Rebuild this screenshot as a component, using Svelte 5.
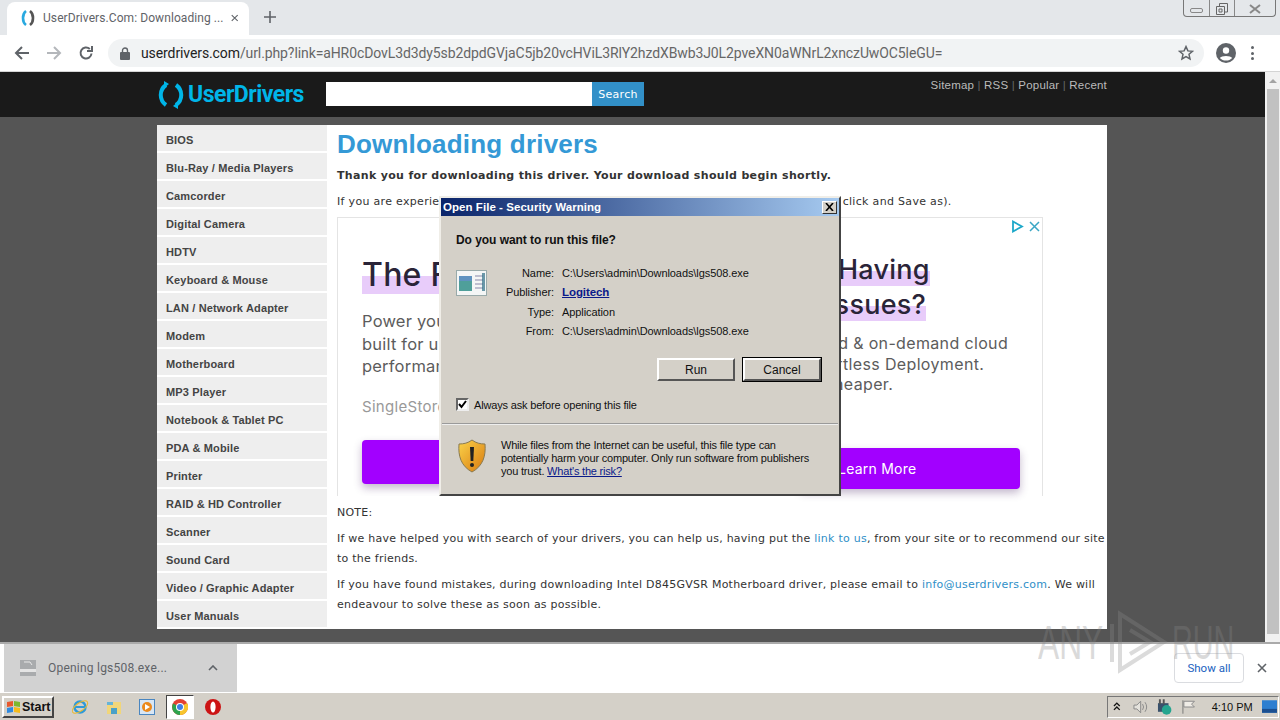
<script>
  const categories = [
    "BIOS", "Blu-Ray / Media Players", "Camcorder", "Digital Camera", "HDTV",
    "Keyboard & Mouse", "LAN / Network Adapter", "Modem", "Motherboard", "MP3 Player",
    "Notebook & Tablet PC", "PDA & Mobile", "Printer", "RAID & HD Controller",
    "Scanner", "Sound Card", "Video / Graphic Adapter", "User Manuals",
  ];
  const url = "aHR0cDovL3d3dy5sb2dpdGVjaC5jb20vcHViL3RlY2hzdXBwb3J0L2pveXN0aWNrL2xnczUwOC5leGU=";
  const fields = [
    ["Name:", "C:\\Users\\admin\\Downloads\\lgs508.exe"],
    ["Publisher:", "Logitech"],
    ["Type:", "Application"],
    ["From:", "C:\\Users\\admin\\Downloads\\lgs508.exe"],
  ];
</script>

<div class="screen">
  <div class="tabstrip">
    <div class="tab">
      <svg class="favicon" width="16" height="18" viewBox="0 0 16 18">
        <path d="M6 2C2 5 2 13 6 16" fill="none" stroke="#29a9e0" stroke-width="2.6"/>
        <path d="M10 2c4 3 4 11 0 14" fill="none" stroke="#555" stroke-width="2.6"/>
      </svg>
      <span class="tabtitle">UserDrivers.Com: Downloading ...</span>
      <svg width="10" height="10" viewBox="0 0 10 10"><path d="M1 1l8 8M9 1l-8 8" stroke="#5f6368" stroke-width="1.5"/></svg>
    </div>
    <svg class="newtab" width="12" height="12" viewBox="0 0 12 12"><path d="M6 0v12M0 6h12" stroke="#5f6368" stroke-width="1.6"/></svg>
    <div class="winbtns">
      <span class="wb min"><i></i></span>
      <span class="wb res">
        <svg width="12" height="12" viewBox="0 0 12 12"><path d="M3.5 3V.5h8V9H9M.5 3.5h8v8h-8zM3 6h3v3H3z" fill="none" stroke="#666"/></svg>
      </span>
      <span class="wb cls">
        <svg width="12" height="10" viewBox="0 0 12 10"><path d="M1 1l10 8M11 1L1 9" stroke="#888" stroke-width="2"/></svg>
      </span>
    </div>
  </div>

  <div class="toolbar">
    <svg class="navicon" width="16" height="16" viewBox="0 0 16 16"><path d="M15 8H2M8 2L2 8l6 6" fill="none" stroke="#5f6368" stroke-width="2"/></svg>
    <svg class="navicon" width="16" height="16" viewBox="0 0 16 16"><path d="M1 8h13M8 2l6 6-6 6" fill="none" stroke="#b4b7bb" stroke-width="2"/></svg>
    <svg class="navicon" width="16" height="16" viewBox="0 0 16 16"><path d="M13.5 8.5A5.5 5.5 0 1 1 11.8 4M14 1v5H9" fill="none" stroke="#5f6368" stroke-width="2"/></svg>
    <div class="omnibox">
      <svg width="10" height="13" viewBox="0 0 10 13"><rect y="5" width="10" height="8" rx="1" fill="#5f6368"/><path d="M2.5 5.5V3.5a2.5 2.5 0 0 1 5 0v2" fill="none" stroke="#5f6368" stroke-width="1.4"/></svg>
      <span class="url"><b>userdrivers.com</b>/url.php?link={url}</span>
      <svg class="star" width="16" height="16" viewBox="0 0 16 16"><path d="M8 1.6l1.9 4.3 4.6.4-3.5 3 1 4.6L8 11.5l-4 2.4 1-4.6-3.5-3 4.6-.4z" fill="none" stroke="#5f6368" stroke-width="1.5"/></svg>
    </div>
    <svg class="avatar" width="20" height="20" viewBox="0 0 20 20"><circle cx="10" cy="10" r="10" fill="#5f6368"/><circle cx="10" cy="7.5" r="3.2" fill="#fff"/><path d="M3.8 15c1.5-2.8 10.9-2.8 12.4 0-3 3.4-9.4 3.4-12.4 0z" fill="#fff"/></svg>
    <div class="dots"><i></i><i></i><i></i></div>
  </div>

  <div class="viewport">
    <div class="page">
      <header class="site-head">
        <div class="head-inner">
          <div class="logo">
            <svg width="28" height="28" viewBox="0 0 28 28">
              <path d="M9 4C2 9 2 19 9 24" fill="none" stroke="#00b5e8" stroke-width="4"/>
              <path d="M19 4c7 5 7 15 0 20" fill="none" stroke="#00b5e8" stroke-width="4"/>
              <path d="M7 0l5 3-5 4zM21 28l-5-3 5-4z" fill="#00b5e8"/>
            </svg>
            <span>UserDrivers</span>
          </div>
          <div class="search">
            <div class="search-input"></div>
            <div class="search-btn">Search</div>
          </div>
          <nav class="top-links">Sitemap <em>|</em> RSS <em>|</em> Popular <em>|</em> Recent</nav>
        </div>
      </header>

      <div class="wrap">
        <aside class="sidebar">
          {#each categories as c}
            <div class="cat">{c}</div>
          {/each}
        </aside>
        <main class="content">
          <h1>Downloading drivers</h1>
          <p class="thanks">Thank you for downloading this driver. Your download should begin shortly.</p>
          <p class="exp">If you are experiencing problems with your download, please use this direct link (right click and Save as).</p>

          <div class="ad">
            <div class="adchoice">
              <svg width="13" height="13" viewBox="0 0 13 13"><path d="M2 1.5v10l9-5z" fill="none" stroke="#1ca8c9" stroke-width="1.8"/></svg>
              <svg width="11" height="11" viewBox="0 0 11 11"><path d="M1 1l9 9M10 1l-9 9" stroke="#3aa6c4" stroke-width="1.5"/></svg>
            </div>
            <div class="ad-left">
              <div class="ad-h"><mark>The Fastest Database</mark></div>
              <div class="ad-p">Power your apps with a<br>built for unified data<br>performance at scale</div>
              <div class="ad-s">SingleStore Inc.</div>
              <div class="ad-btn"></div>
            </div>
            <div class="ad-right">
              <div class="ad-h r1"><mark>Having</mark></div>
              <div class="ad-h r2"><mark>Issues?</mark></div>
              <div class="ad-p">
                <div class="p1">and &amp; on-demand cloud</div>
                <div class="p2">Effortless Deployment.</div>
                <div class="p3">Cheaper.</div>
              </div>
              <div class="ad-btn"><span>Learn More</span></div>
            </div>
          </div>

          <p class="note">NOTE:</p>
          <p class="para">If we have helped you with search of your drivers, you can help us, having put the <a href="#top">link to us</a>, from your site or to recommend our site to the friends.</p>
          <p class="para">If you have found mistakes, during downloading Intel D845GVSR Motherboard driver, please email to <a href="#top">info@userdrivers.com</a>. We will endeavour to solve these as soon as possible.</p>
        </main>
      </div>

      <section class="dialog">
        <div class="titlebar">
          <span>Open File - Security Warning</span>
          <span class="dlg-x"><svg width="9" height="8" viewBox="0 0 9 8"><path d="M1 0l7 8M8 0L1 8" stroke="#000" stroke-width="1.6"/></svg></span>
        </div>
        <div class="dlg-body">
          <div class="question">Do you want to run this file?</div>
          <div class="info">
            <svg class="appicon" width="32" height="27" viewBox="0 0 32 27">
              <rect x=".5" y=".5" width="30" height="25" fill="#f4f6f6" stroke="#9aa"/>
              <rect x="3" y="6" width="13" height="15" fill="#4f9f9a"/>
              <rect x="3" y="6" width="13" height="5" fill="#5f92c0"/>
              <path d="M19 6h8M19 10h8M19 14h8M19 18h8" stroke="#88a"/>
              <path d="M26 3h3v18h-3" fill="#2f6f88" opacity=".7"/>
            </svg>
            <dl>
              {#each fields as [k, v]}
                <div class="row">
                  <dt>{k}</dt>
                  {#if k === "Publisher:"}
                    <dd><a class="publisher" href="#top">{v}</a></dd>
                  {:else}
                    <dd>{v}</dd>
                  {/if}
                </div>
              {/each}
            </dl>
          </div>
          <div class="btns">
            <button class="w2k">Run</button>
            <button class="w2k default">Cancel</button>
          </div>
          <label class="always">
            <span class="check"><svg width="9" height="9" viewBox="0 0 9 9"><path d="M1 4l2.5 3L8 1" fill="none" stroke="#000" stroke-width="2"/></svg></span>
            Always ask before opening this file
          </label>
        </div>
        <div class="dlg-warn">
          <svg width="30" height="34" viewBox="0 0 30 34">
            <defs>
              <linearGradient id="sh" x1="0" x2="1" y1="0" y2="1"><stop offset="0" stop-color="#fbd34a"/><stop offset="1" stop-color="#d87a10"/></linearGradient>
            </defs>
            <path d="M15 1c4 3 8 4 13 4 1 12-2 22-13 28C4 27 1 17 2 5c5 0 9-1 13-4z" fill="url(#sh)" stroke="#8a7a50"/>
            <path d="M13 8h4l-.7 14h-2.6z" fill="#222"/><circle cx="15" cy="26" r="2" fill="#222"/>
          </svg>
          <p>While files from the Internet can be useful, this file type can potentially harm your computer. Only run software from publishers you trust. <a href="#top">What's the risk?</a></p>
        </div>
      </section>
    </div>

    <div class="scrollbar">
      <div class="sb-up"><i></i></div>
      <div class="sb-thumb"></div>
    </div>
  </div>

  <div class="downloads">
    <div class="dl-item">
      <svg width="16" height="16" viewBox="0 0 16 16"><rect width="16" height="16" fill="#a9abad"/><rect x="0" y="9" width="16" height="3" fill="#e4e4e4"/><path d="M4 2h6l2 3" fill="none" stroke="#e8e8e8"/></svg>
      <span class="dl-name">Opening lgs508.exe...</span>
      <svg class="chev" width="10" height="6" viewBox="0 0 10 6"><path d="M1 5l4-4 4 4" fill="none" stroke="#5f6368" stroke-width="1.6"/></svg>
    </div>
    <div class="showall">Show all</div>
    <svg class="dl-close" width="10" height="10" viewBox="0 0 10 10"><path d="M1 1l8 8M9 1l-8 8" stroke="#5f6368" stroke-width="1.6"/></svg>
  </div>

  <footer class="taskbar">
    <button class="start">
      <svg width="15" height="14" viewBox="0 0 15 14">
        <path d="M1 2l6-1v5L1 7z" fill="#e8582c"/><path d="M8 1l6 1v5l-6-1z" fill="#7cb82f"/>
        <path d="M1 8l6-1v5l-6 1z" fill="#2f8ae0"/><path d="M8 7l6 1v5l-6-1z" fill="#f5bb1c"/>
      </svg>
      Start
    </button>
    <div class="quick">
      <svg width="18" height="18" viewBox="0 0 18 18"><circle cx="9" cy="9" r="5.5" fill="none" stroke="#2f9ad8" stroke-width="2.4"/><path d="M4 9h10" stroke="#2f9ad8" stroke-width="2"/><ellipse cx="9" cy="9" rx="9" ry="4" fill="none" stroke="#e8b830" transform="rotate(-35 9 9)"/></svg>
      <svg width="16" height="16" viewBox="0 0 16 16"><path d="M1 3h14v12H1z" fill="#f1d67a"/><path d="M1 3h6v3H1z" fill="#66b4d8"/><path d="M5 15V9h6v6z" fill="#4aa0c8"/></svg>
      <svg width="16" height="16" viewBox="0 0 16 16"><rect x=".5" y=".5" width="15" height="15" fill="#d8e6f4" stroke="#4a86c0"/><circle cx="8" cy="8" r="5" fill="#ec8a1c"/><path d="M6 5l5 3-5 3z" fill="#fff"/></svg>
      <div class="chrome-task">
        <svg width="16" height="16" viewBox="0 0 16 16">
          <circle cx="8" cy="8" r="8" fill="#e34133"/>
          <path d="M8 8L1 4.5A8 8 0 0 0 8 16z" fill="#2da44e"/>
          <path d="M8 8v8a8 8 0 0 0 7-12z" fill="#f7c52d"/>
          <circle cx="8" cy="8" r="4" fill="#fff"/><circle cx="8" cy="8" r="3" fill="#3f7fe6"/>
        </svg>
      </div>
      <svg class="opera" width="16" height="16" viewBox="0 0 16 16"><circle cx="8" cy="8" r="8" fill="#cc1414"/><ellipse cx="8" cy="8" rx="2.6" ry="5.5" fill="#fff"/></svg>
    </div>
    <div class="tray">
      <svg class="tray-up" width="8" height="9" viewBox="0 0 8 9"><path d="M1 4l3-3 3 3M1 8l3-3 3 3" fill="none" stroke="#111" stroke-width="1.4"/></svg>
      <svg width="16" height="14" viewBox="0 0 16 14"><path d="M1 5h3l4-4v12l-4-4H1z" fill="#e4e2dc" stroke="#888"/><path d="M10 4q2 3 0 6M12.5 2q3.5 5 0 10" fill="none" stroke="#888"/></svg>
      <svg width="16" height="16" viewBox="0 0 16 16"><rect x="1" y="4" width="11" height="9" fill="#39516b"/><path d="M3 0v5M7 0v5" stroke="#555" stroke-width="2"/><circle cx="10" cy="11" r="5" fill="#25a58f"/></svg>
      <svg width="16" height="14" viewBox="0 0 16 14"><path d="M2 0v14" stroke="#777"/><path d="M3 1h11l-3 3 3 3H3z" fill="#efece6" stroke="#888"/></svg>
      <span class="clock">4:10 PM</span>
      <svg class="desk" width="16" height="13" viewBox="0 0 16 13"><rect width="16" height="13" fill="#2e7fd0"/><rect y="9" width="16" height="4" fill="#1c4f90"/></svg>
    </div>
  </footer>

  <div class="watermark">
    <span class="wm-any">ANY</span>
    <svg width="60" height="64" viewBox="0 0 60 64"><path d="M4 14v38M12 4v56l44-28zM22 20l20 12-20 12" fill="none" stroke="#8a8a8a" stroke-width="4"/></svg>
    <span class="wm-run">RUN</span>
  </div>
</div>

<style>
  :global(body) { margin: 0; overflow: hidden; }
  .screen { position: relative; width: 1280px; height: 720px; overflow: hidden; display: flex; flex-direction: column; font-family: "Liberation Sans", sans-serif; background: #fff; }

  .tabstrip { height: 35px; background: #e4e7ea; display: flex; align-items: flex-end; flex: none; }
  .tab { width: 242px; height: 33px; margin-left: 7px; box-sizing: border-box; padding: 0 11px 2px 13px; background: #fff; border-radius: 8px 8px 0 0; display: flex; align-items: center; gap: 7px; }
  .favicon { flex: none; }
  .tabtitle { flex: 1; font: 12px Roboto, sans-serif; color: #5f6368; white-space: nowrap; letter-spacing: .08px; }
  .newtab { margin: 0 0 12px 15px; }
  .winbtns { margin: 0 4px auto auto; height: 17px; width: 93px; box-sizing: border-box; border: 1px solid #777; border-top: 0; border-radius: 0 0 4px 4px; display: flex; }
  .wb { display: flex; align-items: center; justify-content: center; border-right: 1px solid #888; }
  .wb.min { width: 25px; } .wb.res { width: 24px; } .wb.cls { flex: 1; border: 0; }
  .wb.min i { width: 11px; height: 3px; border: 1px solid #888; border-radius: 2px; display: block; margin-top: 4px; }
  .wb svg { margin-top: 1px; }

  .toolbar { background: #fff; border-bottom: 1px solid #d4d4d4; box-sizing: border-box; height: 37px; display: flex; align-items: center; flex: none; padding-left: 14px; }
  .navicon { margin-right: 16px; }
  .omnibox { width: 1096px; height: 28px; margin-left: -2px; border-radius: 14px; background: #f1f3f4; display: flex; align-items: center; padding: 0 10px 0 12px; box-sizing: border-box; gap: 11px; }
  .url { flex: 1; font: 14px Roboto, sans-serif; color: #666; white-space: nowrap; letter-spacing: -.1px; }
  .url b { font-weight: 400; color: #222; }
  .avatar { margin-left: 12px; }
  .dots { margin-left: 15px; display: flex; flex-direction: column; gap: 2.5px; }
  .dots i { width: 3px; height: 3px; border-radius: 50%; background: #5f6368; display: block; }

  .viewport { flex: 1; display: flex; min-height: 0; }
  .page { position: relative; flex: 1; background: #555; overflow: hidden; }
  .site-head { height: 45px; background: #1a1a1a; }
  .head-inner { width: 950px; margin-left: 157px; display: flex; height: 100%; }
  .logo { width: 169px; display: flex; align-items: center; gap: 3px; color: #00b5e8; font: bold 23px "Roboto", sans-serif; letter-spacing: -.5px; }
  .logo svg { flex: none; }
  .search { display: flex; margin-top: 10px; height: 24px; }
  .search-input { width: 266px; background: #fff; }
  .search-btn { width: 52px; background: #3290c8; color: #fff; font: 11px "DejaVu Sans", sans-serif; letter-spacing: .3px; display: flex; align-items: center; justify-content: center; }
  .top-links { margin-left: auto; padding-top: 7px; font: 11.5px "Liberation Sans", sans-serif; letter-spacing: .2px; color: #bbb; }
  .top-links em { font-style: normal; color: #666; }

  .wrap { width: 950px; height: 504px; margin: 8px 0 0 157px; background: #fff; display: flex; }
  .sidebar { width: 170px; flex: none; display: flex; flex-direction: column; gap: 2px; }
  .cat { height: 26px; flex: none; box-sizing: border-box; padding: 4px 0 0 9px; background: #eee; display: flex; align-items: center; font: bold 11px "Liberation Sans", sans-serif; letter-spacing: .15px; color: #444; }
  .content { flex: 1; padding-left: 10px; font: 11px "DejaVu Sans", sans-serif; color: #333; letter-spacing: .24px; min-width: 0; }
  h1 { margin: 3px 0 0; font: bold 26px "Liberation Sans", sans-serif; letter-spacing: .2px; color: #3499d6; height: 35px; line-height: 33px; }
  p { margin: 0; }
  .thanks { font-weight: bold; line-height: 20px; margin-top: 3px; letter-spacing: .33px; }
  .exp { line-height: 20px; margin-top: 6px; white-space: nowrap; letter-spacing: .315px; }
  .ad { position: relative; width: 706px; height: 279px; margin-top: 5px; border: 1px solid #e4e4e4; border-bottom: 0; box-sizing: border-box; display: flex; }
  .adchoice { position: absolute; top: 0; right: 0; display: flex; gap: 5px; align-items: center; padding: 2px 2px 0 0; }
  .ad-left { width: 462px; padding: 39px 0 0 24px; box-sizing: border-box; overflow: hidden; flex: none; white-space: nowrap; }
  .ad-right { flex: 1; padding-top: 34px; white-space: nowrap; }
  .ad-h { font: 500 32px/36px Inter, sans-serif; color: #2a2438; }
  .ad-h mark { background: linear-gradient(transparent 55%, #e8ccfa 55%); color: inherit; }
  .ad-right .ad-h { font-size: 27px; line-height: 35px; }
  .r1 { padding-left: 38px; }
  .r2 { padding-left: 27px; }
  .ad-p { font: 16px/20.5px Inter, sans-serif; letter-spacing: .35px; color: #5c5c5c; margin-top: 11px; }
  .p1 { padding-left: 19px; }
  .p2 { padding-left: 5px; }
  .p3 { padding-left: 22px; }
  .ad-left .ad-p { margin-top: 17px; line-height: 22.5px; font-size: 16.5px; letter-spacing: .2px; }
  .ad-s { font: 15px Inter, sans-serif; letter-spacing: .3px; color: #999; margin-top: 19px; }
  .ad-btn { height: 44px; background: #a200ff; border-radius: 4px; box-shadow: 0 4px 8px rgba(60,20,90,.3); color: #fff; }
  .ad-left .ad-btn { margin-top: 24px; }
  .ad-right .ad-btn { margin-top: 53px; width: 220px; height: 41px; box-sizing: border-box; padding-left: 38px; font: 14px/41px Inter, sans-serif; }
  .note { margin-top: 7px; line-height: 20px; }
  .para { line-height: 20px; margin: 6px -3px 0 0; }
  .content a { color: #2f8fc8; text-decoration: none; }

  .dialog { position: absolute; left: 439px; top: 124px; width: 402px; height: 300px; box-sizing: border-box; background: #d4d0c8; border: 2px solid; border-color: #f0eee8 #444 #444 #f0eee8; font: 11px "Liberation Sans", sans-serif; color: #111; display: flex; flex-direction: column; letter-spacing: -.08px; }
  .titlebar { height: 18px; flex: none; background: linear-gradient(90deg, #0a246a, #a6caf0); color: #fff; font-weight: bold; font-size: 11.5px; letter-spacing: .05px; display: flex; align-items: center; justify-content: space-between; padding: 0 2px; }
  .dlg-x { width: 15px; height: 13px; background: #d4d0c8; border: 1px solid; border-color: #fff #333 #333 #fff; box-sizing: border-box; display: flex; align-items: center; justify-content: center; }
  .dlg-body { height: 209px; padding: 0 17px 0 14px; border-bottom: 2px groove #eee; box-sizing: border-box; flex: none; margin: 0 1px; }
  .question { font-weight: bold; font-size: 12px; letter-spacing: -.05px; margin-top: 17px; line-height: 14px; }
  .info { display: flex; margin-top: 16px; }
  .appicon { margin-top: 7px; flex: none; }
  dl { margin: 0; width: 300px; }
  .row { display: flex; height: 19.5px; align-items: center; gap: 8px; }
  dt { width: 66px; text-align: right; }
  dd { margin: 0; }
  .publisher { color: #0a1a8a; font-weight: bold; font-size: 11.5px; }
  .btns { display: flex; justify-content: flex-end; gap: 8px; margin-top: 17px; }
  .w2k { width: 78px; height: 23px; background: #d4d0c8; border: 2px solid; border-color: #fff #555 #555 #fff; font: 12px "Liberation Sans", sans-serif; color: #111; padding: 0; box-sizing: border-box; }
  .w2k.default { outline: 1px solid #000; }
  .always { display: flex; align-items: center; gap: 5px; margin-top: 17px; letter-spacing: -.17px; }
  .check { width: 13px; height: 13px; background: #fff; border: 2px solid; border-color: #666 #eee #eee #666; box-sizing: border-box; display: flex; align-items: center; justify-content: center; }
  .dlg-warn { display: flex; padding: 14px 0 0 16px; gap: 14px; }
  .dlg-warn p { width: 320px; line-height: 13px; font-size: 11px; letter-spacing: -.2px; }
  .dlg-warn a { color: #0a1a8a; }

  .scrollbar { width: 15px; background: #f1f1f1; flex: none; }
  .sb-up { height: 17px; display: flex; align-items: center; justify-content: center; }
  .sb-up i { border: 4px solid transparent; border-top: 0; border-bottom: 4px solid #a3a3a3; }
  .sb-thumb { height: 545px; margin-left: 2px; width: 12px; background: #c1c1c1; }

  .downloads { height: 50px; flex: none; box-sizing: border-box; border-top: 2px solid #aaa; background: #fff; display: flex; align-items: center; position: relative; }
  .dl-item { width: 233px; height: 48px; margin-left: 4px; background: #d2d2d2; display: flex; align-items: center; box-sizing: border-box; padding-left: 16px; color: #5f6368; font: 12px Roboto, sans-serif; letter-spacing: .22px; }
  .dl-name { margin-left: 12px; flex: 1; }
  .chev { margin-right: 19px; }
  .showall { margin-left: auto; width: 70px; height: 30px; border: 1px solid #dadce0; border-radius: 4px; box-sizing: border-box; color: #1a5fc0; font: 11.5px Roboto, sans-serif; display: flex; align-items: center; justify-content: center; }
  .dl-close { margin: 0 13px; }

  .taskbar { height: 28px; flex: none; background: #d4d0c8; border-top: 1px solid #fff; box-sizing: border-box; display: flex; align-items: center; }
  .start { width: 52px; height: 22px; margin-left: 2px; padding: 0 0 0 2px; display: flex; align-items: center; gap: 1px; background: #d4d0c8; border: 2px solid; border-color: #fff #444 #444 #fff; box-sizing: border-box; font: bold 12.5px "Liberation Sans", sans-serif; color: #111; }
  .quick { display: flex; align-items: center; gap: 17px; margin-left: 17px; }
  .chrome-task { width: 28px; height: 24px; margin: 0 -6px; background: #fff; border: 1px solid; border-color: #444 #fff #fff #444; box-sizing: border-box; display: flex; align-items: center; justify-content: center; }
  .opera { margin-left: 0; }
  .tray { margin: 0 1px 0 auto; width: 172px; height: 22px; box-sizing: border-box; border: 1px solid; border-color: #777 #fff #fff #777; display: flex; align-items: center; gap: 9px; padding-left: 5px; }
  .tray-up { margin-right: 3px; }
  .clock { font: 11px "Liberation Sans", sans-serif; color: #111; margin-left: 6px; white-space: nowrap; }
  .desk { margin-left: auto; margin-right: 1px; }

  .watermark { position: absolute; left: 1038px; top: 610px; display: flex; align-items: center; gap: 4px; font: 48px "Liberation Sans", sans-serif; color: #888; opacity: .3; pointer-events: none; }
  .wm-any, .wm-run { display: inline-block; transform-origin: left center; }
  .wm-any { width: 66px; transform: scaleX(.66); }
  .wm-run { width: 62px; transform: scaleX(.6); }
</style>
